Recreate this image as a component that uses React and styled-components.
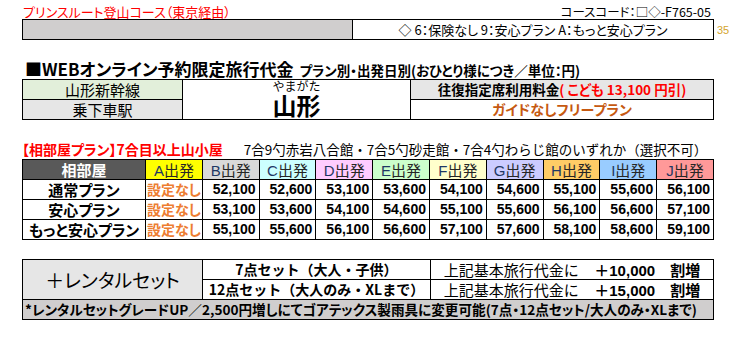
import styled, { createGlobalStyle } from 'styled-components'

const JP = '"Noto Sans CJK JP", "Noto Sans", sans-serif'
const NUM = '"Liberation Sans", "Noto Sans CJK JP", sans-serif'

const GlobalStyle = createGlobalStyle`
  body {
    margin: 0;
    background: #fff;
    font-family: ${JP};
    color: #000;
  }
`

const departures = [
  { key: 'A', bg: '#ffff00' },
  { key: 'B', bg: '#d9d9d9' },
  { key: 'C', bg: '#ccffff' },
  { key: 'D', bg: '#ffccff' },
  { key: 'E', bg: '#ccffcc' },
  { key: 'F', bg: '#ffffcc' },
  { key: 'G', bg: '#ccccff' },
  { key: 'H', bg: '#ffcc66' },
  { key: 'I', bg: '#99ccff' },
  { key: 'J', bg: '#ff9999' },
]

const plans = [
  { name: '通常プラン', prices: ['52,100', '52,600', '53,100', '53,600', '54,100', '54,600', '55,100', '55,600', '56,100'] },
  { name: '安心プラン', prices: ['53,100', '53,600', '54,100', '54,600', '55,100', '55,600', '56,100', '56,600', '57,100'] },
  { name: 'もっと安心プラン', prices: ['55,100', '55,600', '56,100', '56,600', '57,100', '57,600', '58,100', '58,600', '59,100'] },
]

const App = () => (
  <>
    <GlobalStyle />
    <Page>
      <TopRow>
        <CourseTitle>プリンスルート登山コース（東京経由）</CourseTitle>
        <CourseCode>コースコード：□◇-F765-05</CourseCode>
      </TopRow>
      <CodeBarRow>
        <CodeBar>
          <CodeBlank />
          <CodeLegend>◇ 6：保険なし 9：安心プラン A：もっと安心プラン</CodeLegend>
        </CodeBar>
        <PageNo>35</PageNo>
      </CodeBarRow>

      <Heading>
        ■WEBオンライン予約限定旅行代金<SubHeading>プラン別・出発日別(おひとり様につき／単位：円)</SubHeading>
      </Heading>

      <StationGrid>
        <StationLabel $bg='#e2efda'>山形新幹線</StationLabel>
        <StationName>
          <Ruby>やまがた</Ruby>
          <BigName>山形</BigName>
        </StationName>
        <FareHead>
          往復指定席利用料金<RedText>( こども 13,100 円引)</RedText>
        </FareHead>
        <StationLabel $bg='#e6e6e6'>乗下車駅</StationLabel>
        <GuideNote>ガイドなしフリープラン</GuideNote>
      </StationGrid>

      <SectionRow>
        <SectionTitle>【相部屋プラン】7合目以上山小屋</SectionTitle>
        <SectionNote>7合9勺赤岩八合館・7合5勺砂走館・7合4勺わらじ館のいずれか（選択不可）</SectionNote>
      </SectionRow>

      <PriceTable>
        <colgroup>
          <col style={{ width: 123 }} />
          {departures.map((d) => <col key={d.key} />)}
        </colgroup>
        <thead>
          <tr>
            <RoomHead>相部屋</RoomHead>
            {departures.map((d) => (
              <DepHead key={d.key} $bg={d.bg}>
                <DepLetter>{d.key}</DepLetter>出発
              </DepHead>
            ))}
          </tr>
        </thead>
        <tbody>
          {plans.map((p) => (
            <tr key={p.name}>
              <PlanName>{p.name}</PlanName>
              <NotSet>設定なし</NotSet>
              {p.prices.map((v, i) => (
                <Price key={i}>{v}</Price>
              ))}
            </tr>
          ))}
        </tbody>
      </PriceTable>

      <RentalTable>
        <colgroup>
          <col style={{ width: 180 }} />
          <col style={{ width: 228 }} />
          <col />
        </colgroup>
        <tbody>
          <tr>
            <RentalLabel rowSpan={2}>＋レンタルセット</RentalLabel>
            <SetName>7点セット（大人・子供）</SetName>
            <Surcharge>
              上記基本旅行代金に<Extra>＋10,000　割増</Extra>
            </Surcharge>
          </tr>
          <tr>
            <SetName>12点セット（大人のみ・XLまで）</SetName>
            <Surcharge>
              上記基本旅行代金に<Extra>＋15,000　割増</Extra>
            </Surcharge>
          </tr>
          <tr>
            <UpgradeNote colSpan={3}>
              *レンタルセットグレードUP／2,500円増しにてゴアテックス製雨具に変更可能(7点・12点セット/大人のみ・XLまで)
            </UpgradeNote>
          </tr>
        </tbody>
      </RentalTable>
    </Page>
  </>
)

const Page = styled.div`
  width: 739px;
  height: 341px;
  padding-left: 22px;
  box-sizing: border-box;
  font-feature-settings: 'palt';
`

const TopRow = styled.div`
  width: 692px;
  height: 19px;
  display: flex;
  justify-content: space-between;
  align-items: flex-end;
`

const CourseTitle = styled.div`
  color: #ff0000;
  font-size: 13px;
  line-height: 15px;
  padding-left: 1px;
`

const CourseCode = styled.div`
  font-size: 12.5px;
  line-height: 15px;
  padding-right: 3px;
`

const CodeBarRow = styled.div`
  display: flex;
  align-items: center;
`

const CodeBar = styled.div`
  width: 692px;
  height: 21px;
  box-sizing: border-box;
  border: 1px solid #000;
  display: grid;
  grid-template-columns: 330px 1fr;
`

const CodeBlank = styled.div`
  background: #d0cece;
  border-right: 1px solid #000;
`

const CodeLegend = styled.div`
  font-size: 13px;
  line-height: 19px;
  text-align: center;
`

const PageNo = styled.div`
  margin-left: 3px;
  font-family: ${NUM};
  font-size: 11px;
  color: #d4a52c;
`

const Heading = styled.div`
  margin-top: 20px;
  height: 19px;
  padding-left: 3px;
  font-size: 17px;
  line-height: 18px;
  font-weight: 700;
  white-space: nowrap;
`

const SubHeading = styled.span`
  margin-left: 6px;
  font-size: 13.5px;
`

const StationGrid = styled.div`
  width: 692px;
  box-sizing: border-box;
  border: 1px solid #000;
  display: grid;
  grid-template-columns: 159px 227px 1fr;
  grid-template-rows: 19px 19px;
  gap: 1px;
  background: #000;
`

const StationLabel = styled.div`
  background: ${({ $bg }) => $bg};
  font-size: 15px;
  line-height: 19px;
  text-align: center;
  font-feature-settings: normal;
`

const StationName = styled.div`
  grid-row: 1 / 3;
  grid-column: 2;
  background: #fff;
  display: flex;
  flex-direction: column;
  align-items: center;
`

const Ruby = styled.div`
  font-size: 12px;
  line-height: 12px;
  font-feature-settings: normal;
`

const BigName = styled.div`
  font-size: 24px;
  line-height: 26px;
  font-weight: 700;
`

const FareHead = styled.div`
  background: #e6e6e6;
  font-size: 13.5px;
  line-height: 19px;
  font-weight: 700;
  text-align: center;
`

const RedText = styled.span`
  color: #ff0000;
`

const GuideNote = styled.div`
  background: #fff;
  color: #c65911;
  font-size: 14px;
  line-height: 19px;
  font-weight: 700;
  text-align: center;
`

const SectionRow = styled.div`
  margin-top: 20px;
  height: 19px;
  display: flex;
  align-items: center;
  white-space: nowrap;
`

const SectionTitle = styled.div`
  color: #ff0000;
  font-size: 14px;
  font-weight: 700;
  line-height: 19px;
`

const SectionNote = styled.div`
  margin-left: 21px;
  font-size: 13.5px;
  line-height: 19px;
  font-feature-settings: normal;
`

const PriceTable = styled.table`
  width: 692px;
  table-layout: fixed;
  border-collapse: collapse;
  border: 1px solid #000;
  td, th {
    border: 1px solid #000;
    height: 19px;
    padding: 0;
    line-height: 19px;
    white-space: nowrap;
    overflow: hidden;
  }
`

const RoomHead = styled.th`
  background: #595959;
  color: #fff;
  font-size: 15px;
  font-weight: 700;
`

const DepHead = styled.th`
  background: ${({ $bg }) => $bg};
  color: #262626;
  font-size: 15px;
  font-weight: 400;
`

const DepLetter = styled.span`
  font-family: ${NUM};
  color: #1f3864;
  line-height: 0;
`

const PlanName = styled.td`
  font-size: 15px;
  font-weight: 700;
  text-align: center;
`

const NotSet = styled.td`
  color: #ed7d31;
  font-size: 14px;
  font-weight: 700;
  text-align: center;
`

const Price = styled.td`
  font-family: ${NUM};
  font-size: 14px;
  font-weight: 700;
  text-align: right;
  padding-right: 3px !important;
`

const RentalTable = styled.table`
  margin-top: 19px;
  width: 692px;
  table-layout: fixed;
  border-collapse: collapse;
  border: 1px solid #000;
  td {
    border: 1px solid #000;
    height: 19px;
    padding: 0;
    line-height: 19px;
    white-space: nowrap;
    overflow: hidden;
  }
`

const RentalLabel = styled.td`
  background: #e6e6e6;
  font-size: 19px;
  text-align: center;
`

const SetName = styled.td`
  font-size: 14px;
  font-weight: 700;
  text-align: center;
  font-feature-settings: normal;
`

const Surcharge = styled.td`
  font-size: 15px;
  text-align: center;
`

const Extra = styled.span`
  margin-left: 16px;
  font-family: ${NUM};
  font-weight: 700;
  line-height: 0;
`

const UpgradeNote = styled.td`
  background: #d0cece;
  font-size: 13.6px;
  font-weight: 700;
  padding-left: 2px !important;
`

export default App
